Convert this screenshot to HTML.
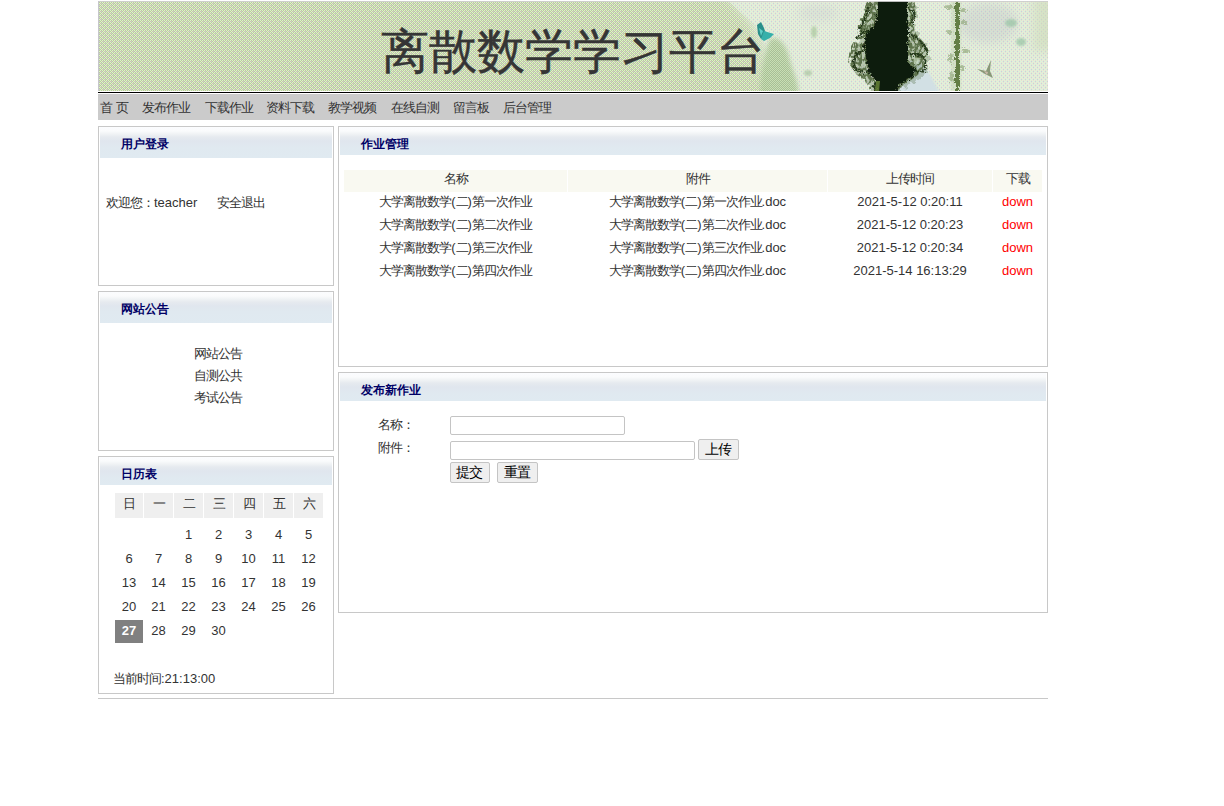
<!DOCTYPE html>
<html><head><meta charset="utf-8"><style>
html,body{margin:0;padding:0;background:#fff;}
body{width:1224px;height:806px;position:relative;overflow:hidden;font-family:"Liberation Sans",sans-serif;font-size:13px;color:#333;}
.a{position:absolute;}
.c{letter-spacing:-1px;}
.t{position:absolute;white-space:nowrap;line-height:16px;}
.panel{position:absolute;border:1px solid #c8c8c8;box-sizing:border-box;background:#fff;}
.hd{position:absolute;left:1px;top:0;background:linear-gradient(#fbfcfe 0px,#fafbfc 4px,#f0f3f5 7px,#e6eaef 10px,#e0e6ee 14px,#e0e9f0 20px,#e0eaf1 100%);}
.ttl{position:absolute;font-weight:bold;color:#000066;white-space:nowrap;line-height:16px;font-size:12px;}
.ttl .c{letter-spacing:0;}
.nav>span{position:absolute;top:0;line-height:26px;white-space:nowrap;color:#333;}
.cal div{position:absolute;text-align:center;line-height:21px;}
.th{background:#efefef;}
.row div{position:absolute;text-align:center;white-space:nowrap;line-height:23px;}
.btn{position:absolute;box-sizing:border-box;border:1px solid #c4c4c4;border-radius:2px;background:#efefef;text-align:center;color:#000;line-height:19px;font-size:14px;text-indent:-2px;}
.btn .c{letter-spacing:-1px;}
.inp{position:absolute;box-sizing:border-box;border:1px solid #c4c4c4;border-radius:2px;background:#fff;}
</style></head><body>
<div class="a" style="left:98px;top:1px;width:950px;height:90px;"><svg width="950" height="90" viewBox="0 0 950 90" style="display:block">
<defs>
<pattern id="chk" x="2" y="3" width="4" height="4" patternUnits="userSpaceOnUse">
<rect width="4" height="4" fill="#daf3ca"/>
<path d="M1 0h1v1h-1zM3 0h1v1h-1zM0 1h1v1h-1zM2 1h1v1h-1zM1 2h1v1h-1zM3 2h1v1h-1zM0 3h1v1h-1zM2 3h1v1h-1z" fill="#bdca9c"/>
<path d="M1 3h1v1h-1zM3 1h1v1h-1z" fill="#c9c9d1"/>
<path d="M0 3h1v1h-1zM2 1h1v1h-1z" fill="#d2c7ae"/>
</pattern>
<pattern id="chk2" x="2" y="3" width="4" height="4" patternUnits="userSpaceOnUse">
<rect width="4" height="4" fill="#e2f5d8"/>
<path d="M1 0h1v1h-1zM3 0h1v1h-1zM1 2h1v1h-1zM3 2h1v1h-1z" fill="#ebdfd3"/>
<path d="M0 1h1v1h-1zM2 1h1v1h-1zM0 3h1v1h-1zM2 3h1v1h-1z" fill="#dbeedf"/>
<path d="M1 3h1v1h-1zM3 1h1v1h-1z" fill="#cbced6"/>
</pattern>
<filter id="b2" x="-20%" y="-20%" width="140%" height="140%"><feGaussianBlur stdDeviation="2"/></filter>
<filter id="b4" x="-30%" y="-30%" width="160%" height="160%"><feGaussianBlur stdDeviation="5"/></filter>
<filter id="b1" x="-20%" y="-20%" width="140%" height="140%"><feGaussianBlur stdDeviation="1"/></filter>
<filter id="bh" x="-20%" y="-20%" width="140%" height="140%"><feGaussianBlur stdDeviation="0.6"/></filter>
<filter id="rough" x="-30%" y="-10%" width="160%" height="120%"><feTurbulence type="turbulence" baseFrequency="0.12" numOctaves="2" seed="3" result="n"/><feDisplacementMap in="SourceGraphic" in2="n" scale="9" xChannelSelector="R" yChannelSelector="G"/></filter>
<filter id="rough2" x="-30%" y="-10%" width="160%" height="120%"><feTurbulence type="turbulence" baseFrequency="0.25" numOctaves="2" seed="7" result="n"/><feDisplacementMap in="SourceGraphic" in2="n" scale="5" xChannelSelector="R" yChannelSelector="G"/></filter>
<filter id="curls" x="0" y="0" width="950" height="90" filterUnits="userSpaceOnUse"><feTurbulence type="turbulence" baseFrequency="0.22 0.16" numOctaves="2" seed="5" result="t"/><feColorMatrix in="t" type="matrix" values="0 0 0 0 0.11  0 0 0 0 0.17  0 0 0 0 0.07  -5 0 0 0 1.9" result="c"/><feComposite in="c" in2="SourceAlpha" operator="in"/></filter>
<pattern id="chk3" x="2" y="3" width="2" height="2" patternUnits="userSpaceOnUse"><rect width="2" height="2" fill="#c4dcb0"/><path d="M1 0h1v1h-1zM0 1h1v1h-1z" fill="#9fb98a"/></pattern>
<mask id="blotm" maskUnits="userSpaceOnUse" x="0" y="0" width="950" height="90"><g filter="url(#b2)"><path d="M672 38 C682 33 690 48 692 60 C696 73 702 86 700 94 L662 94 C662 80 664 58 672 38 Z" fill="#fff"/></g></mask>
<clipPath id="cl"><rect width="950" height="90"/></clipPath>
</defs>
<g clip-path="url(#cl)">
<rect width="950" height="90" fill="url(#chk)"/>
<g filter="url(#b4)" opacity="0.9">
<path d="M625 -10 L960 -10 L960 100 L668 100 L664 45 L652 22 Z" fill="url(#chk2)"/>
</g>
<path d="M630 0 L960 0 L960 90 L672 90 L668 45 L657 24 Z" fill="url(#chk2)" opacity="0.85"/>
<!-- greyish patches right -->
<g filter="url(#b4)" opacity="0.3">
<ellipse cx="890" cy="22" rx="30" ry="20" fill="#b8bcc4"/>
<ellipse cx="720" cy="12" rx="20" ry="8" fill="#c4c8cc"/>
</g>
<g filter="url(#b4)" opacity="0.55">
<rect x="935" y="-5" width="25" height="55" fill="url(#chk)"/>
</g>
<!-- green blotch -->
<rect x="650" y="20" width="60" height="75" fill="url(#chk3)" mask="url(#blotm)" opacity="0.85"/>
<g filter="url(#b1)" opacity="0.7">
<ellipse cx="716" cy="31" rx="3" ry="6" fill="#a9c89c"/>
<ellipse cx="710" cy="72" rx="4" ry="3" fill="#a9c4a0"/>
<ellipse cx="913" cy="22" rx="6" ry="4" fill="#98c4a4"/>
<ellipse cx="923" cy="41" rx="5" ry="4" fill="#98c4a4"/>
</g>
<!-- dress -->
<g filter="url(#b1)">
<path d="M806 62 L818 58 L830 70 L842 92 L795 92 Z" fill="#d2e0e4"/>
</g>
<!-- hair outer curls -->
<g filter="url(#rough)">
<path d="M770 -3 L816 -3 L818 11 L814 21 L818 33 L827 43 L830 55 L826 69 L816 77 L802 87 L798 93 L774 93 L768 81 L758 73 L750 61 L752 47 L759 35 L760 23 L766 9 Z" fill="#56744a" opacity="0.32"/>
</g>
<g filter="url(#curls)">
<path d="M770 -3 L816 -3 L818 11 L814 21 L818 33 L827 43 L830 55 L826 69 L816 77 L802 87 L798 93 L774 93 L768 81 L758 73 L750 61 L752 47 L759 35 L760 23 L766 9 Z" fill="#000"/>
</g>
<g fill="none" stroke="#1e3112" stroke-width="2" filter="url(#rough2)" opacity="0.9">
<path d="M772 2 C768 10 764 18 760 28"/>
<path d="M775 29 C766 28 760 30 758 36"/>
<path d="M766 48 C756 50 752 58 756 66 C760 72 768 72 770 66"/>
<path d="M810 6 C816 10 816 16 812 22"/>
<path d="M810 30 C818 36 826 42 828 52"/>
<path d="M812 52 C822 50 828 58 826 66 C822 72 814 70 812 64"/>
<path d="M776 80 C774 86 776 90 778 93"/>
</g>
<g fill="#d8e8cc" opacity="0.6" filter="url(#bh)"><ellipse cx="818" cy="60" rx="2.5" ry="3.5"/></g>
<!-- hair core -->
<g filter="url(#rough2)">
<path d="M778 -3 L808 -3 L808 14 L809 29 L808 44 L808 59 L815 66 L814 74 L808 78 L799 83 L796 93 L777 93 L776 79 L769 69 L767 54 L765 45 L767 31 L775 24 L778 11 Z" fill="#111c0a"/>
</g>
<path d="M778 80 L782 80 L781 91 L777 91 Z" fill="#7a9a40" opacity="0.7"/>
<!-- stem -->
<g filter="url(#b1)">
<rect x="853" y="0" width="10" height="90" fill="#b8cca0" opacity="0.35"/>
</g>
<g filter="url(#rough2)">
<rect x="856" y="-2" width="4" height="94" fill="#647e44"/>
</g>
<g filter="url(#rough2)" fill="#88a070" opacity="0.6">
<ellipse cx="850" cy="5" rx="4" ry="2"/><ellipse cx="864" cy="8" rx="3" ry="2"/><ellipse cx="865" cy="20" rx="3" ry="2"/>
<ellipse cx="850" cy="30" rx="3" ry="2"/><ellipse cx="866" cy="48" rx="4" ry="2"/>
<ellipse cx="851" cy="56" rx="2" ry="5"/><ellipse cx="852" cy="75" rx="2" ry="5"/><ellipse cx="863" cy="66" rx="2" ry="3"/>
</g>
<!-- butterfly 1 -->
<g>
<path d="M659 24 L663 21 L666 27 L668 33 L663 38 L660 33 Z" fill="#2a8f8a"/>
<path d="M666 30 L676 33 L672 37 L666 40 L663 38 Z" fill="#36b0aa"/>
<path d="M661 27 L665 30 L663 35 Z" fill="#5fd0c8"/>
</g>
<!-- butterfly 2 -->
<path d="M879 68 L888 70 L893 59 L892 70 L895 77 L887 73 Z" fill="#8a9878"/><path d="M886 70 L890 71 L889 74 Z" fill="#c8b8a8"/>
<rect x="0" y="0" width="950" height="1" fill="#cdcdcd" opacity="0.9"/>
<rect x="0" y="0" width="1" height="90" fill="#c6c6cc"/>
</g>
</svg><div class="t" style="left:283px;top:23px;font-size:48px;line-height:56px;color:#353535;-webkit-text-stroke:0.4px #353535;">离散数学学习平台</div></div>
<div class="a" style="left:98px;top:92px;width:950px;height:1px;background:#000;"></div>
<div class="a nav" style="left:98px;top:94px;width:950px;height:26px;background:#cbcbcb;"><span style="left:2px;top:1px"><span class="c">首</span> <span class="c">页</span></span><span style="left:44px;top:1px"><span class="c">发布作业</span></span><span style="left:107px;top:1px"><span class="c">下载作业</span></span><span style="left:168px;top:1px"><span class="c">资料下载</span></span><span style="left:230px;top:1px"><span class="c">教学视频</span></span><span style="left:293px;top:1px"><span class="c">在线自测</span></span><span style="left:355px;top:1px"><span class="c">留言板</span></span><span style="left:405px;top:1px"><span class="c">后台管理</span></span></div>
<div class="panel" style="left:98px;top:126px;width:236px;height:160px;"><div class="hd" style="width:232px;height:31px;"></div><div class="ttl" style="left:22px;top:9px;"><span class="c">用户登录</span></div><div class="t" style="left:7px;top:68px;"><span class="c">欢迎您：</span>teacher</div><div class="t" style="left:118px;top:68px;"><span class="c">安全退出</span></div></div>
<div class="panel" style="left:98px;top:291px;width:236px;height:160px;"><div class="hd" style="width:232px;height:31px;"></div><div class="ttl" style="left:22px;top:9px;"><span class="c">网站公告</span></div><div class="t" style="left:95px;top:54px;"><span class="c">网站公告</span></div><div class="t" style="left:95px;top:76px;"><span class="c">自测公共</span></div><div class="t" style="left:95px;top:98px;"><span class="c">考试公告</span></div></div>
<div class="panel" style="left:98px;top:456px;width:236px;height:238px;"><div class="hd" style="width:232px;height:28px;"></div><div class="ttl" style="left:22px;top:9px;"><span class="c">日历表</span></div><div class="cal"><div class="th" style="left:16px;top:36px;width:28px;height:25px;line-height:21px;"><span class="c">日</span></div><div class="th" style="left:45px;top:36px;width:29px;height:25px;line-height:21px;"><span class="c">一</span></div><div class="th" style="left:75px;top:36px;width:29px;height:25px;line-height:21px;"><span class="c">二</span></div><div class="th" style="left:105px;top:36px;width:29px;height:25px;line-height:21px;"><span class="c">三</span></div><div class="th" style="left:135px;top:36px;width:29px;height:25px;line-height:21px;"><span class="c">四</span></div><div class="th" style="left:165px;top:36px;width:29px;height:25px;line-height:21px;"><span class="c">五</span></div><div class="th" style="left:195px;top:36px;width:29px;height:25px;line-height:21px;"><span class="c">六</span></div><div style="left:75px;top:67px;width:29px;height:23px;">1</div><div style="left:105px;top:67px;width:29px;height:23px;">2</div><div style="left:135px;top:67px;width:29px;height:23px;">3</div><div style="left:165px;top:67px;width:29px;height:23px;">4</div><div style="left:195px;top:67px;width:29px;height:23px;">5</div><div style="left:16px;top:91px;width:28px;height:23px;">6</div><div style="left:45px;top:91px;width:29px;height:23px;">7</div><div style="left:75px;top:91px;width:29px;height:23px;">8</div><div style="left:105px;top:91px;width:29px;height:23px;">9</div><div style="left:135px;top:91px;width:29px;height:23px;">10</div><div style="left:165px;top:91px;width:29px;height:23px;">11</div><div style="left:195px;top:91px;width:29px;height:23px;">12</div><div style="left:16px;top:115px;width:28px;height:23px;">13</div><div style="left:45px;top:115px;width:29px;height:23px;">14</div><div style="left:75px;top:115px;width:29px;height:23px;">15</div><div style="left:105px;top:115px;width:29px;height:23px;">16</div><div style="left:135px;top:115px;width:29px;height:23px;">17</div><div style="left:165px;top:115px;width:29px;height:23px;">18</div><div style="left:195px;top:115px;width:29px;height:23px;">19</div><div style="left:16px;top:139px;width:28px;height:23px;">20</div><div style="left:45px;top:139px;width:29px;height:23px;">21</div><div style="left:75px;top:139px;width:29px;height:23px;">22</div><div style="left:105px;top:139px;width:29px;height:23px;">23</div><div style="left:135px;top:139px;width:29px;height:23px;">24</div><div style="left:165px;top:139px;width:29px;height:23px;">25</div><div style="left:195px;top:139px;width:29px;height:23px;">26</div><div style="left:16px;top:163px;width:28px;height:23px;background:#808080;color:#fff;font-weight:bold;">27</div><div style="left:45px;top:163px;width:29px;height:23px;">28</div><div style="left:75px;top:163px;width:29px;height:23px;">29</div><div style="left:105px;top:163px;width:29px;height:23px;">30</div><div style="left:14px;top:214px;text-align:left;line-height:16px;white-space:nowrap;"><span class="c">当前时间</span>:21:13:00</div></div></div>
<div class="panel" style="left:338px;top:126px;width:710px;height:241px;"><div class="hd" style="width:706px;height:28px;"></div><div class="ttl" style="left:22px;top:9px;"><span class="c">作业管理</span></div><div class="row"><div style="left:5px;top:43px;width:223px;height:22px;line-height:18px;background:#f9f9f1;"><span class="c">名称</span></div><div style="left:229px;top:43px;width:259px;height:22px;line-height:18px;background:#f9f9f1;"><span class="c">附件</span></div><div style="left:489px;top:43px;width:164px;height:22px;line-height:18px;background:#f9f9f1;"><span class="c">上传时间</span></div><div style="left:654px;top:43px;width:49px;height:22px;line-height:18px;background:#f9f9f1;"><span class="c">下载</span></div><div style="left:5px;top:63px;width:223px;height:23px;"><span class="c">大学离散数学</span>(<span class="c">二</span>)<span class="c">第一次作业</span></div><div style="left:229px;top:63px;width:259px;height:23px;"><span class="c">大学离散数学</span>(<span class="c">二</span>)<span class="c">第一次作业</span>.doc</div><div style="left:489px;top:63px;width:164px;height:23px;">2021-5-12 0:20:11</div><div style="left:654px;top:63px;width:49px;height:23px;"><span style="color:#f00">down</span></div><div style="left:5px;top:86px;width:223px;height:23px;"><span class="c">大学离散数学</span>(<span class="c">二</span>)<span class="c">第二次作业</span></div><div style="left:229px;top:86px;width:259px;height:23px;"><span class="c">大学离散数学</span>(<span class="c">二</span>)<span class="c">第二次作业</span>.doc</div><div style="left:489px;top:86px;width:164px;height:23px;">2021-5-12 0:20:23</div><div style="left:654px;top:86px;width:49px;height:23px;"><span style="color:#f00">down</span></div><div style="left:5px;top:109px;width:223px;height:23px;"><span class="c">大学离散数学</span>(<span class="c">二</span>)<span class="c">第三次作业</span></div><div style="left:229px;top:109px;width:259px;height:23px;"><span class="c">大学离散数学</span>(<span class="c">二</span>)<span class="c">第三次作业</span>.doc</div><div style="left:489px;top:109px;width:164px;height:23px;">2021-5-12 0:20:34</div><div style="left:654px;top:109px;width:49px;height:23px;"><span style="color:#f00">down</span></div><div style="left:5px;top:132px;width:223px;height:23px;"><span class="c">大学离散数学</span>(<span class="c">二</span>)<span class="c">第四次作业</span></div><div style="left:229px;top:132px;width:259px;height:23px;"><span class="c">大学离散数学</span>(<span class="c">二</span>)<span class="c">第四次作业</span>.doc</div><div style="left:489px;top:132px;width:164px;height:23px;">2021-5-14 16:13:29</div><div style="left:654px;top:132px;width:49px;height:23px;"><span style="color:#f00">down</span></div></div></div>
<div class="panel" style="left:338px;top:372px;width:710px;height:241px;"><div class="hd" style="width:706px;height:28px;"></div><div class="ttl" style="left:22px;top:9px;"><span class="c">发布新作业</span></div><div class="t" style="left:39px;top:44px;"><span class="c">名称：</span></div><div class="t" style="left:39px;top:67px;"><span class="c">附件：</span></div><div class="inp" style="left:111px;top:43px;width:175px;height:19px;"></div><div class="inp" style="left:111px;top:68px;width:245px;height:19px;"></div><div class="btn" style="left:359px;top:66px;width:41px;height:21px;"><span class="c">上传</span></div><div class="btn" style="left:111px;top:89px;width:40px;height:21px;"><span class="c">提交</span></div><div class="btn" style="left:158px;top:89px;width:41px;height:21px;"><span class="c">重置</span></div></div>
<div class="a" style="left:98px;top:698px;width:950px;height:1px;background:#c8c8c8;"></div>
</body></html>
